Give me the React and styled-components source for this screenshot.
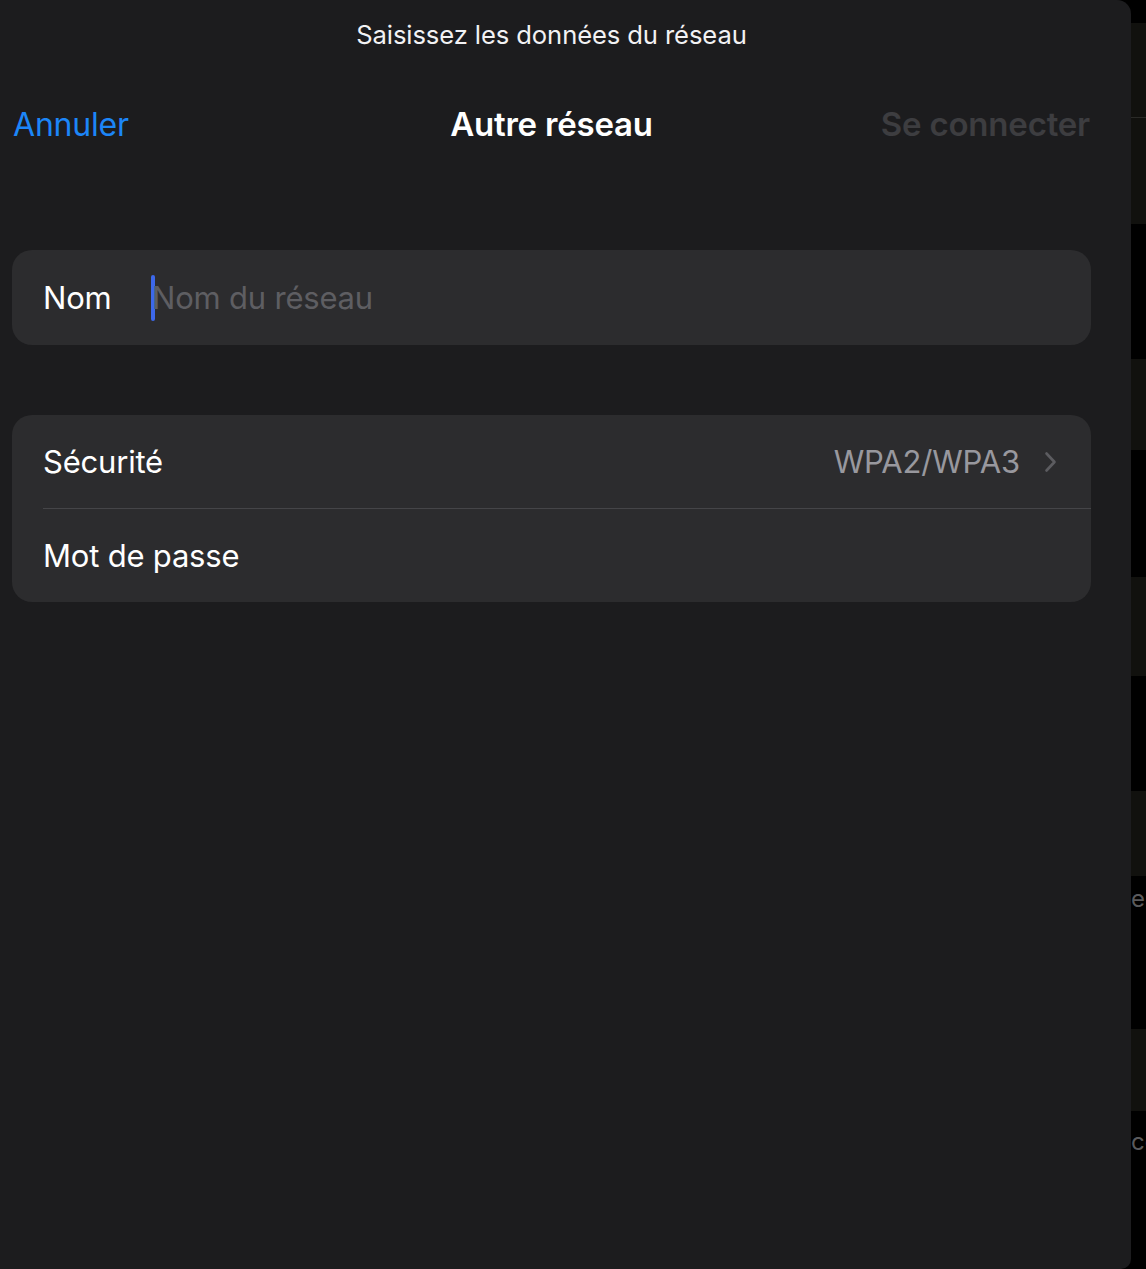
import React from 'react';
import styled, {createGlobalStyle} from 'styled-components';

const GlobalStyle = createGlobalStyle`
  html, body {
    margin: 0;
    padding: 0;
    background: #000;
  }
  body {
    font-family: Inter, "Noto Sans", "Liberation Sans", sans-serif;
    -webkit-font-smoothing: antialiased;
  }
`;

const Page = styled.div`
  display: flex;
  width: 1146px;
  height: 1269px;
  overflow: hidden;
`;

const Sheet = styled.div`
  width: 1131px;
  height: 1269px;
  flex-shrink: 0;
  background: #1c1c1e;
  border-top-right-radius: 14px;
  border-bottom-right-radius: 10px;
`;

const Content = styled.div`
  width: 1103px;
  box-sizing: border-box;
  padding: 0 12px;
  display: flex;
  flex-direction: column;
`;

const Prompt = styled.div`
  margin-top: 20px;
  height: 30px;
  line-height: 30px;
  text-align: center;
  color: #f2f2f4;
  font-size: 25.6px;
  letter-spacing: -0.1px;
`;

const NavBar = styled.div`
  margin-top: 44px;
  height: 60px;
  display: grid;
  grid-template-columns: 1fr auto 1fr;
  align-items: center;
  padding: 0 1px;
`;

const NavButton = styled.span`
  font-size: ${({bold}) => bold ? 33 : 32}px;
  font-weight: ${({bold}) => bold ? 600 : 400};
  color: ${({disabled}) => disabled ? '#3d3d40' : '#1c86f8'};
  justify-self: ${({end}) => end ? 'end' : 'start'};
  letter-spacing: -0.2px;
`;

const Title = styled.span`
  font-size: 33px;
  font-weight: 600;
  color: #fff;
  letter-spacing: -0.2px;
`;

const Group = styled.div`
  margin-top: ${({top}) => top}px;
  background: #2c2c2e;
  border-radius: 20px;
  overflow: hidden;
`;

const Row = styled.div`
  height: ${({h}) => h || 93}px;
  display: flex;
  align-items: center;
  padding: 0 34px 0 31px;
  font-size: 31px;
  color: #fff;
  letter-spacing: -0.2px;
`;

const Separator = styled.div`
  height: 1px;
  margin-left: 31px;
  background: #454548;
`;

const Label = styled.span`
  width: 108px;
  flex-shrink: 0;
`;

const Field = styled.div`
  flex: 1;
  display: flex;
  align-items: center;
`;

const Caret = styled.span`
  width: 4px;
  height: 46px;
  border-radius: 2px;
  background: #3d68ea;
  margin-right: -3px;
`;

const Placeholder = styled.span`
  color: #5e5e62;
`;

const Value = styled.span`
  margin-left: auto;
  color: #98989e;
  margin-right: 24px;
`;

const Chevron = () => (
  <svg width="13" height="22" viewBox="0 0 13 22">
    <path d="M2.5 2.5 L10.5 11 L2.5 19.5" fill="none" stroke="#5c5c60"
          strokeWidth="2.6" strokeLinecap="round" strokeLinejoin="round"/>
  </svg>
);

const Backdrop = styled.div`
  flex: 1;
  display: flex;
  flex-direction: column;
  background: #000;
`;

const Band = styled.div`
  height: ${({h}) => h}px;
  flex-shrink: 0;
  box-sizing: border-box;
  padding-top: ${({pad}) => pad || 0}px;
  background: ${({dark}) => dark ? '#11110e' : '#000'};
  border-bottom: ${({line}) => line ? '1px solid #2a2a27' : 'none'};
  color: #5a5a5c;
  font-size: 24px;
  line-height: 30px;
  overflow: hidden;
  white-space: nowrap;
`;

const bands = [
  {h: 23},
  {h: 95, dark: true, line: true},
  {h: 106, dark: true},
  {h: 135},
  {h: 91, dark: true},
  {h: 127},
  {h: 99, dark: true},
  {h: 115},
  {h: 85, dark: true},
  {h: 153, text: 'e', pad: 8},
  {h: 82, dark: true},
  {h: 157, text: 'co', pad: 16},
];

const App = () => (
  <Page>
    <GlobalStyle/>
    <Sheet>
      <Content>
        <Prompt>Saisissez les données du réseau</Prompt>
        <NavBar>
          <NavButton>Annuler</NavButton>
          <Title>Autre réseau</Title>
          <NavButton bold disabled end>Se connecter</NavButton>
        </NavBar>

        <Group top={96}>
          <Row h={95}>
            <Label>Nom</Label>
            <Field>
              <Caret/>
              <Placeholder>Nom du réseau</Placeholder>
            </Field>
          </Row>
        </Group>

        <Group top={70}>
          <Row>
            <span>Sécurité</span>
            <Value>WPA2/WPA3</Value>
            <Chevron/>
          </Row>
          <Separator/>
          <Row>
            <span>Mot de passe</span>
          </Row>
        </Group>
      </Content>
    </Sheet>
    <Backdrop>
      {bands.map((b, i) => (
        <Band key={i} h={b.h} dark={b.dark} line={b.line} pad={b.pad}>{b.text}</Band>
      ))}
    </Backdrop>
  </Page>
);

export default App;
